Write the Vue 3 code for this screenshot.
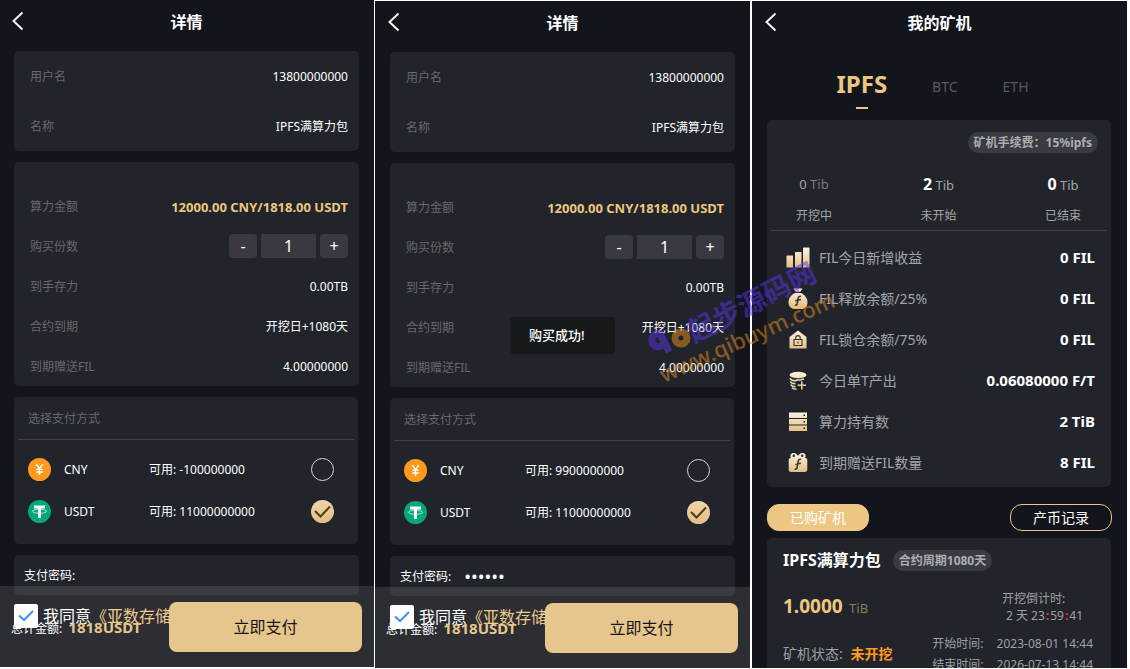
<script setup>
import { reactive, ref } from 'vue'

const orders = reactive([
  { id: 'before', cny: '-100000000', usdt: '11000000000', password: '', method: 'USDT', count: '1', agree: true, toast: '' },
  { id: 'after', cny: '9900000000', usdt: '11000000000', password: '123456', method: 'USDT', count: '1', agree: true, toast: '购买成功!' },
])

const step = (order, by) => {
  order.count = String(Math.max(1, Number(order.count) + by))
}

const tabs = ['IPFS', 'BTC', 'ETH']
const activeTab = ref('IPFS')

const stats = [
  { value: '0', label: '开挖中', muted: true },
  { value: '2', label: '未开始' },
  { value: '0', label: '已结束' },
]

const assets = [
  { icon: 'bars', label: 'FIL今日新增收益', value: '0 FIL' },
  { icon: 'bag', label: 'FIL释放余额/25%', value: '0 FIL' },
  { icon: 'lock', label: 'FIL锁仓余额/75%', value: '0 FIL' },
  { icon: 'coins', label: '今日单T产出', value: '0.06080000 F/T' },
  { icon: 'server', label: '算力持有数', value: '2 TiB' },
  { icon: 'gift', label: '到期赠送FIL数量', value: '8 FIL' },
]
</script>

<template>
  <main class="board">
    <section v-for="order in orders" :key="order.id" class="slot" :class="order.id">
      <div class="screen">
        <header class="bar">
          <button class="back" type="button" aria-label="返回">
            <svg width="12" height="20" viewBox="0 0 12 20"><path d="M10.5 1.5 1.5 10l9 8.5" /></svg>
          </button>
          <h1>详情</h1>
        </header>

        <div class="card user">
          <div class="row"><span>用户名</span><b>13800000000</b></div>
          <div class="row"><span>名称</span><b>IPFS满算力包</b></div>
        </div>

        <div class="card detail">
          <div class="row"><span>算力金额</span><strong>12000.00 CNY/1818.00 USDT</strong></div>
          <div class="row">
            <label :for="order.id + '-count'">购买份数</label>
            <div class="stepper">
              <button type="button" aria-label="减少" @click="step(order, -1)">-</button>
              <input :id="order.id + '-count'" v-model="order.count" type="text" />
              <button type="button" aria-label="增加" @click="step(order, 1)">+</button>
            </div>
          </div>
          <div class="row"><span>到手存力</span><b>0.00TB</b></div>
          <div class="row"><span>合约到期</span><b>开挖日+1080天</b></div>
          <div class="row"><span>到期赠送FIL</span><b>4.00000000</b></div>
        </div>

        <div class="card pay">
          <h2>选择支付方式</h2>
          <label class="method">
            <svg class="coin" width="23" height="23" viewBox="0 0 23 23">
              <circle cx="11.5" cy="11.5" r="11.5" fill="#ff9a1f" />
              <path d="M8.3 6.2l3.2 4.5 3.2-4.5M11.5 10.7v6.3M8.3 11.4h6.4M8.3 14h6.4" fill="none" stroke="#fff" stroke-width="1.4" />
            </svg>
            <span class="code">CNY</span>
            <span class="funds">可用: {{ order.cny }}</span>
            <span class="pick">
              <input v-model="order.method" type="radio" :name="order.id + '-method'" value="CNY" />
              <svg width="23" height="23" viewBox="0 0 23 23"><path d="M4 11l5.5 5.5L19 6.5" /></svg>
            </span>
          </label>
          <label class="method">
            <svg class="coin" width="23" height="23" viewBox="0 0 23 23">
              <circle cx="11.5" cy="11.5" r="11.5" fill="#06a87a" />
              <ellipse cx="11.5" cy="11.3" rx="7" ry="2" fill="none" stroke="#b9e8da" stroke-width="0.9" />
              <path d="M6 5.5h11v3h-4v9.500h-3v-9.500h-4z" fill="#fff" />
            </svg>
            <span class="code">USDT</span>
            <span class="funds">可用: {{ order.usdt }}</span>
            <span class="pick">
              <input v-model="order.method" type="radio" :name="order.id + '-method'" value="USDT" />
              <svg width="23" height="23" viewBox="0 0 23 23"><path d="M4 11l5.5 5.5L19 6.5" /></svg>
            </span>
          </label>
        </div>

        <div class="card secret">
          <label :for="order.id + '-password'">支付密码:</label>
          <input :id="order.id + '-password'" v-model="order.password" type="password" autocomplete="off" />
        </div>

        <div class="agree">
          <label>
            <span class="tick">
              <input v-model="order.agree" type="checkbox" />
              <svg width="24" height="24" viewBox="0 0 24 24"><path d="M5 11.5l5 4.500 9-9" /></svg>
            </span>
            我同意
          </label>
          <a href="#">《亚数存储</a>
        </div>

        <footer class="checkout">
          <p>总计金额: <strong>1818USDT</strong></p>
          <button type="button">立即支付</button>
        </footer>

        <div v-if="order.toast" class="toast" role="status">{{ order.toast }}</div>
      </div>
    </section>

    <section class="slot miner">
      <div class="screen">
        <header class="bar">
          <button class="back" type="button" aria-label="返回">
            <svg width="12" height="20" viewBox="0 0 12 20"><path d="M10.5 1.5 1.5 10l9 8.5" /></svg>
          </button>
          <h1>我的矿机</h1>
        </header>

        <nav class="tabs">
          <button v-for="tab in tabs" :key="tab" type="button" :class="{ on: tab === activeTab }" @click="activeTab = tab">{{ tab }}</button>
        </nav>

        <div class="card summary">
          <span class="badge">矿机手续费：15%ipfs</span>
          <div class="stats">
            <div v-for="stat in stats" :key="stat.label" class="stat" :class="{ muted: stat.muted }">
              <p><b>{{ stat.value }}</b> Tib</p>
              <span>{{ stat.label }}</span>
            </div>
          </div>
          <ul class="assets">
            <li v-for="asset in assets" :key="asset.label">
              <svg class="glyph" width="24" height="24" viewBox="0 0 24 24">
                <defs>
                  <linearGradient :id="'gold-' + asset.icon" x1="0" y1="0" x2="0" y2="24" gradientUnits="userSpaceOnUse">
                    <stop offset="0.1" stop-color="#fbf3e4" />
                    <stop offset="0.9" stop-color="#e3bd7d" />
                  </linearGradient>
                </defs>
                <g :fill="'url(#gold-' + asset.icon + ')'">
                  <template v-if="asset.icon === 'bars'">
                    <rect x="0.5" y="9.5" width="6.5" height="12" rx="0.5" />
                    <rect x="9" y="6" width="6.5" height="15.5" rx="0.5" />
                    <rect x="17" y="1.5" width="6.5" height="20" rx="0.5" />
                  </template>
                  <template v-else-if="asset.icon === 'bag'">
                    <path d="M7.5 1.5h9l-2.5 3.5h-4z" />
                    <path d="M9 6h6c4 2 6.5 5.500 6.500 9.500 0 4-3 6.500-6 6.500h-7c-3 0-6-2.500-6-6.500C2.500 11.500 5 8 9 6z" />
                    <path class="ink" d="M15 9.500c-1.500-.8-2.600.3-2.900 2l-.8 5c-.3 1.500-1.200 2-2.400 1.300M9.300 13.800l5.600-1.400" />
                  </template>
                  <template v-else-if="asset.icon === 'lock'">
                    <path d="M12 2.500l8.500 6.500v11.500h-17v-11.500z" />
                    <path class="ink thin" d="M8 11.500h8v6h-8zM9.800 11.300v-1.500a2.200 2.200 0 0 1 4.400 0v1.500M12 13.500v2" />
                  </template>
                  <template v-else-if="asset.icon === 'coins'">
                    <ellipse cx="12" cy="6" rx="8.5" ry="3.3" />
                    <path class="line" d="M4 9.300c.5 1.700 3 2.500 6.500 2.500M4.500 12.500c.5 1.500 2.500 2.200 5 2.300M5 15.500c.5 1.500 2.500 2.200 4.500 2.200M6 18.700c.8 1 2.500 1.500 4.500 1.500M10 11h4l4-1" />
                    <path d="M15 12.500h1.600v3h3.400v1.600h-3.400v3.400h-1.600v-3.400h-3.400v-1.600h3.400z" />
                  </template>
                  <template v-else-if="asset.icon === 'server'">
                    <rect x="3" y="2.5" width="18" height="5.5" />
                    <rect x="3" y="9" width="18" height="5.5" />
                    <rect x="3" y="15.5" width="18" height="5.5" />
                    <path class="hole" d="M17.500 4.500h1.500v1.500h-1.500zM17.500 11h1.500v1.500h-1.500zM17.500 17.500h1.500v1.500h-1.500z" />
                  </template>
                  <template v-else>
                    <path d="M5 7C3.500 4.500 5 2 7.500 2 10 2 11.500 4 12 5 12.500 4 14 2 16.500 2 19 2 20.500 4.500 19 7c1.500 0 2.300.8 2.300 2v9.500c0 1.500-.9 2.500-2.300 2.500H5c-1.400 0-2.300-1-2.300-2.500V9C2.700 7.800 3.500 7 5 7z" />
                    <circle class="hole" cx="7.8" cy="4.8" r="1.2" />
                    <circle class="hole" cx="16.2" cy="4.8" r="1.2" />
                    <path class="ink" d="M15 8.500c-1.500-.8-2.600.3-2.900 2l-1 6c-.3 1.500-1.200 2.200-2.400 1.500M9.300 13.600l5.600-1.400" />
                  </template>
                </g>
              </svg>
              <span>{{ asset.label }}</span>
              <b>{{ asset.value }}</b>
            </li>
          </ul>
        </div>

        <div class="actions">
          <button type="button" class="solid">已购矿机</button>
          <button type="button">产币记录</button>
        </div>

        <div class="card machine">
          <div class="name"><h2>IPFS满算力包</h2><span class="badge">合约周期1080天</span></div>
          <div class="power">
            <p class="size"><strong>1.0000</strong> TiB</p>
            <p class="countdown">开挖倒计时:<br /><span>2 天 23<i>:</i>59<i>:</i>41</span></p>
          </div>
          <div class="state">
            <p class="status">矿机状态: <strong>未开挖</strong></p>
            <dl>
              <dt>开始时间:</dt><dd>2023-08-01 14:44</dd>
              <dt>结束时间:</dt><dd>2026-07-13 14:44</dd>
            </dl>
          </div>
        </div>
      </div>
    </section>

    <svg class="watermark" width="200" height="140" viewBox="0 0 200 140" aria-hidden="true">
      <g fill="none" stroke-width="7">
        <path d="M20 84a6.5 6.5 0 1 0 4 9M19 81l10 21" stroke="#5a35e8" />
        <circle cx="41" cy="88" r="6" stroke="#e8941f" />
      </g>
      <text class="cn" transform="translate(54 93) rotate(-27)">起步源码网</text>
      <text class="url" transform="translate(24 133) rotate(-24)">www.qibuym.com</text>
    </svg>
  </main>
</template>

<style>
html,
body {
  background: #fff;
}
</style>

<style scoped>
* {
  box-sizing: border-box;
  margin: 0;
  padding: 0;
}

.board {
  position: relative;
  display: grid;
  grid-template-columns: 375fr 377fr 378fr;
  height: 100vh;
  overflow: hidden;
  color: #fff;
  font-family: "Noto Sans", "Noto Sans CJK SC", sans-serif;
  font-size: 12px;
  line-height: 16px;
}

button,
input {
  border: 0;
  background: none;
  color: inherit;
  font: inherit;
}

button {
  cursor: pointer;
}

.slot {
  display: grid;
  min-width: 0;
  min-height: 0;
  border: 0 solid #fff;
}

.before {
  border-width: 0 1px 2px 0;
}

.after {
  border-width: 1px 2px 1px 0;
}

.miner {
  border-width: 1px 3px 1px 0;
}

.screen {
  position: relative;
  min-height: 0;
  padding: 0 15px 0 14px;
  overflow: hidden;
  background: #13151c;
}

.after .screen,
.miner .screen {
  padding-left: 15px;
}

.bar {
  position: relative;
  display: grid;
  place-items: center;
  height: 44px;
}

.bar h1 {
  font-size: 16px;
  line-height: 24px;
}

.back {
  position: absolute;
  left: -3px;
  top: 11px;
  display: grid;
  place-items: center;
  width: 14px;
  height: 20px;
}

.back path {
  fill: none;
  stroke: #f2f2f2;
  stroke-width: 2;
}

.card {
  border-radius: 5px;
  background: #22242b;
}

.card + .card {
  margin-top: 11px;
}

.user {
  margin-top: 7px;
}

.row {
  display: flex;
  align-items: center;
  justify-content: space-between;
  height: 40px;
  padding: 0 11px 0 16px;
  color: #66686c;
}

.user .row {
  height: 50px;
}

.row > span,
.row > b,
.row > strong,
.row > label,
.code,
.secret label,
.checkout p {
  padding-top: 2px;
}

.row b {
  color: #fff;
  font-weight: 400;
}

.row strong {
  color: #edc67f;
  font-size: 13px;
}

.detail {
  padding-top: 24px;
}

.stepper {
  display: flex;
  gap: 4px;
  color: #fff;
  font-size: 16px;
}

.stepper button {
  width: 28px;
  height: 24px;
  border-radius: 4px;
  background: #3a3941;
}

.stepper input {
  width: 55px;
  height: 24px;
  background: #3a3941;
  text-align: center;
}

.pay {
  margin-right: 1px;
  padding-bottom: 12px;
}

.pay h2 {
  height: 43px;
  margin: 0 4px 8px;
  padding: 2px 0 0 10px;
  border-bottom: 1px solid #3e4045;
  color: #66686c;
  font-size: 12px;
  font-weight: 400;
  line-height: 40px;
}

.method {
  display: flex;
  align-items: center;
  height: 42px;
  padding: 0 24px 0 14px;
}

.code {
  width: 85px;
  margin-left: 13px;
}

.funds {
  flex: 1;
  padding-top: 2px;
}

.pick,
.tick {
  display: grid;
}

.pick > *,
.tick > * {
  grid-area: 1 / 1;
}

.pick input {
  width: 23px;
  height: 23px;
  border: 1px solid #d5d5d7;
  border-radius: 50%;
  appearance: none;
}

.pick input:checked {
  border: 0;
  background: linear-gradient(#efd6a8, #e2be82);
}

.pick svg,
.tick svg {
  visibility: hidden;
  fill: none;
  stroke: #4f3c1c;
  stroke-width: 2;
  pointer-events: none;
}

input:checked + svg {
  visibility: visible;
}

.secret {
  display: flex;
  align-items: center;
  height: 40px;
  padding: 0 10px;
}

.secret input {
  flex: 1;
  min-width: 0;
  height: 24px;
  margin-left: 13px;
  outline: 0;
  font-size: 18px;
}

.agree {
  display: flex;
  align-items: center;
  margin-top: 9px;
  font-size: 16px;
  line-height: 24px;
  white-space: nowrap;
}

.agree label {
  display: flex;
  align-items: center;
  gap: 5px;
}

.agree a {
  color: #edc67f;
  text-decoration: none;
}

.tick input {
  width: 24px;
  height: 24px;
  border-radius: 2px;
  background: #fff;
  appearance: none;
}

.tick svg {
  stroke: #2f80f5;
}

.checkout {
  position: absolute;
  right: 0;
  bottom: 0;
  left: 0;
  display: flex;
  align-items: center;
  justify-content: space-between;
  height: 81px;
  padding: 0 12px 0 11px;
  background: rgba(255, 255, 255, 0.11);
}

.checkout strong {
  margin-left: 3px;
  color: #e6c68c;
  font-size: 15px;
}

.checkout button {
  width: 193px;
  height: 50px;
  border-radius: 8px;
  background: #e6c68c;
  color: #15161a;
  font-size: 16px;
}

.toast {
  position: absolute;
  top: 316px;
  left: 36%;
  padding: 9px 30px 9px 19px;
  border-radius: 4px;
  background: #17181a;
  font-size: 13px;
  font-weight: 500;
  line-height: 19px;
}

.tabs {
  display: flex;
  align-items: flex-start;
  justify-content: center;
  gap: 45px;
  height: 75px;
  padding: 20px 14px 0 0;
  color: #56585d;
  font-size: 14px;
  line-height: 44px;
}

.tabs .on {
  display: grid;
  justify-items: center;
  color: #edc67f;
  font-size: 24px;
  font-weight: 700;
  line-height: 38px;
}

.tabs .on::after {
  width: 12px;
  height: 2px;
  margin-top: 4px;
  background: #edc67f;
  content: "";
}

.badge {
  padding: 0 6px;
  border-radius: 11px;
  background: #3a3b41;
  color: #adaeb1;
  font-weight: 700;
  line-height: 21px;
}

.summary {
  display: flex;
  flex-direction: column;
  margin-right: 1px;
  padding: 12px 4px 4px;
}

.summary .badge {
  align-self: flex-end;
  margin-right: 9px;
}

.stats {
  display: flex;
  justify-content: space-between;
  padding: 20px 26px 6px 25px;
  border-bottom: 1px solid #3e4045;
  color: #a3a4a7;
}

.stat {
  display: grid;
  justify-items: center;
  width: 36px;
  white-space: nowrap;
}

.stat p {
  margin-bottom: 12px;
  font-size: 13px;
  line-height: 22px;
}

.stat b {
  color: #fff;
  font-size: 16px;
}

.stat.muted p {
  color: #77797d;
}

.stat.muted b {
  color: #a3a4a7;
  font-size: 13px;
  font-weight: 400;
}

.assets {
  padding-top: 6px;
  list-style: none;
}

.assets li {
  display: flex;
  align-items: center;
  gap: 9px;
  height: 41px;
  padding: 0 12px 0 15px;
  color: #a3a4a7;
  font-size: 14px;
}

.assets b {
  margin-left: auto;
  padding-bottom: 2px;
  color: #fff;
  font-size: 15px;
}

.ink {
  fill: none;
  stroke: #3a342c;
  stroke-width: 1.5;
}

.thin {
  stroke-width: 1.1;
}

.line {
  fill: none;
  stroke: #eed9b3;
  stroke-width: 1.6;
}

.hole {
  fill: #22242b;
}

.actions {
  display: flex;
  justify-content: space-between;
  margin: 17px 0 7px;
}

.actions button {
  width: 102px;
  height: 27px;
  border: 1px solid #edc683;
  border-radius: 12px;
  font-size: 14px;
}

.actions .solid {
  background: #edc683;
}

.machine {
  margin-right: 1px;
  padding: 12px 16px;
  color: #9fa0a3;
}

.name {
  display: flex;
  align-items: center;
  gap: 12px;
}

.name h2 {
  color: #fff;
  font-size: 16px;
  line-height: 21px;
}

.power {
  display: flex;
  justify-content: space-between;
  margin-top: 19px;
}

.size {
  color: #8d7a58;
  font-size: 13px;
  line-height: 32px;
}

.size strong {
  margin-right: 3px;
  color: #edc67f;
  font-size: 19px;
}

.countdown {
  width: 93px;
  line-height: 17px;
}

.countdown span {
  margin-left: 4px;
}

.countdown i {
  padding: 0 1px;
  color: #f03a3a;
  font-style: normal;
  font-weight: 700;
}

.state {
  display: flex;
  justify-content: space-between;
  margin-top: 9px;
}

.status {
  font-size: 14px;
  line-height: 42px;
}

.status strong {
  margin-left: 4px;
  color: #ff9a1f;
}

.state dl {
  display: grid;
  grid-template-columns: auto auto;
  column-gap: 13px;
  padding-right: 2px;
  line-height: 21px;
}

.watermark {
  position: absolute;
  top: 250px;
  left: 640px;
  opacity: 0.5;
  pointer-events: none;
}

.cn {
  fill: #5a35e8;
  font-size: 28px;
  font-weight: 700;
}

.url {
  fill: #e8941f;
  font-size: 22px;
  font-weight: 500;
}
</style>
